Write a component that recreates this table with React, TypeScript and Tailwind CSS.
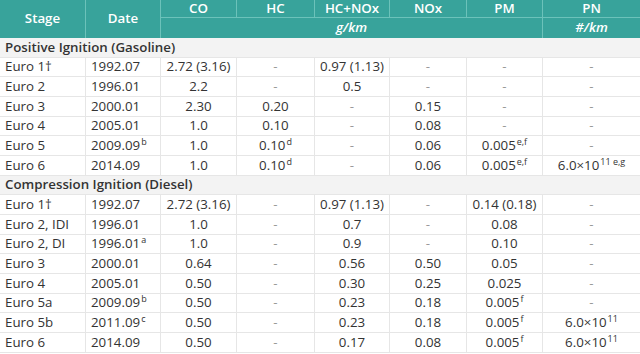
import React from "react";

type Row = { stage: string; date: React.ReactNode; cells: React.ReactNode[] };

const cols = "grid grid-cols-[86px_75px_76px_78px_75px_77px_76px_97px]";

const Sup = ({ children }: { children: React.ReactNode }) => (
  <span className="text-[9px] relative -top-[5px] ml-[1px]">{children}</span>
);

const gasoline: Row[] = [
  { stage: "Euro 1†", date: "1992.07", cells: ["2.72 (3.16)", "-", "0.97 (1.13)", "-", "-", "-"] },
  { stage: "Euro 2", date: "1996.01", cells: ["2.2", "-", "0.5", "-", "-", "-"] },
  { stage: "Euro 3", date: "2000.01", cells: ["2.30", "0.20", "-", "0.15", "-", "-"] },
  { stage: "Euro 4", date: "2005.01", cells: ["1.0", "0.10", "-", "0.08", "-", "-"] },
  {
    stage: "Euro 5",
    date: <>2009.09<Sup>b</Sup></>,
    cells: ["1.0", <>0.10<Sup>d</Sup></>, "-", "0.06", <>0.005<Sup>e,f</Sup></>, "-"],
  },
  {
    stage: "Euro 6",
    date: "2014.09",
    cells: ["1.0", <>0.10<Sup>d</Sup></>, "-", "0.06", <>0.005<Sup>e,f</Sup></>, <>6.0×10<Sup>11 e,g</Sup></>],
  },
];

const diesel: Row[] = [
  { stage: "Euro 1†", date: "1992.07", cells: ["2.72 (3.16)", "-", "0.97 (1.13)", "-", "0.14 (0.18)", "-"] },
  { stage: "Euro 2, IDI", date: "1996.01", cells: ["1.0", "-", "0.7", "-", "0.08", "-"] },
  { stage: "Euro 2, DI", date: <>1996.01<Sup>a</Sup></>, cells: ["1.0", "-", "0.9", "-", "0.10", "-"] },
  { stage: "Euro 3", date: "2000.01", cells: ["0.64", "-", "0.56", "0.50", "0.05", "-"] },
  { stage: "Euro 4", date: "2005.01", cells: ["0.50", "-", "0.30", "0.25", "0.025", "-"] },
  { stage: "Euro 5a", date: <>2009.09<Sup>b</Sup></>, cells: ["0.50", "-", "0.23", "0.18", <>0.005<Sup>f</Sup></>, "-"] },
  {
    stage: "Euro 5b",
    date: <>2011.09<Sup>c</Sup></>,
    cells: ["0.50", "-", "0.23", "0.18", <>0.005<Sup>f</Sup></>, <>6.0×10<Sup>11</Sup></>],
  },
  {
    stage: "Euro 6",
    date: "2014.09",
    cells: ["0.50", "-", "0.17", "0.08", <>0.005<Sup>f</Sup></>, <>6.0×10<Sup>11</Sup></>],
  },
];

const DataRow = ({ row }: { row: Row }) => (
  <div className={`${cols} h-[19.67px] border-b border-[#e6e6e6] bg-white`}>
    <div className="pl-[5px] flex items-center border-r border-[#e6e6e6]">{row.stage}</div>
    <div className="pl-[5px] flex items-center border-r border-[#e6e6e6]">
      <span>{row.date}</span>
    </div>
    {row.cells.map((c, i) => (
      <div
        key={i}
        className={`flex items-center justify-center ${i < 5 ? "border-r border-[#e6e6e6]" : ""} ${
          c === "-" ? "text-[#999]" : ""
        }`}
      >
        <span>{c}</span>
      </div>
    ))}
  </div>
);

const Section = ({ title }: { title: string }) => (
  <div className="h-[19.67px] border-b border-[#e6e6e6] bg-[#f3f3f3] pl-[5px] flex items-center font-semibold">
    {title}
  </div>
);

export default function App() {
  return (
    <div
      className="w-[640px] h-[354px] overflow-hidden bg-white text-[#333] text-[13.3px] leading-none"
      style={{ fontFamily: '"Open Sans", "Noto Sans", sans-serif' }}
    >
      {/* header */}
      <div className={`${cols} grid-rows-[18px_20px] bg-[#38a39b] text-white font-semibold`}>
        <div className="row-span-2 flex items-center justify-center border-r border-[#6cc2ba]">Stage</div>
        <div className="row-span-2 flex items-center justify-center border-r border-[#6cc2ba]">Date</div>
        {["CO", "HC", "HC+NOx", "NOx", "PM", "PN"].map((h, i) => (
          <div
            key={h}
            className={`flex items-center justify-center border-b border-[#6cc2ba] ${i < 5 ? "border-r" : ""}`}
          >
            {h}
          </div>
        ))}
        <div className="col-span-5 flex items-center justify-center italic border-r border-[#6cc2ba]">g/km</div>
        <div className="flex items-center justify-center italic">#/km</div>
      </div>

      <Section title="Positive Ignition (Gasoline)" />
      {gasoline.map((r, i) => (
        <DataRow key={"g" + i} row={r} />
      ))}
      <Section title="Compression Ignition (Diesel)" />
      {diesel.map((r, i) => (
        <DataRow key={"d" + i} row={r} />
      ))}
    </div>
  );
}
